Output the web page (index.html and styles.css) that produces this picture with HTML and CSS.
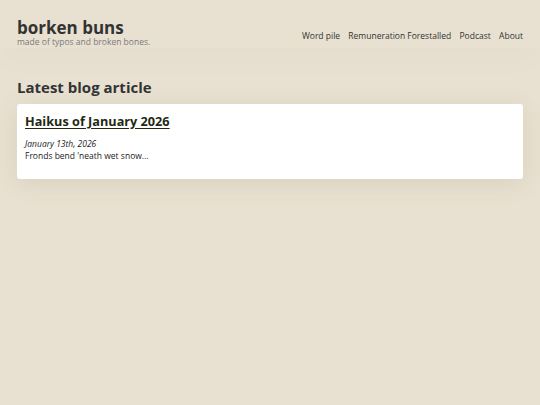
FILE: index.html
```html
<!DOCTYPE html>
<html>
<head>
<meta charset="utf-8">
<link rel="stylesheet" href="styles.css">
</head>
<body>
<header class="site-header">
  <div class="brand">
    <div class="site-title">borken buns</div>
    <div class="tagline">made of typos and broken bones.</div>
  </div>
  <nav class="nav">
    <a href="#">Word pile</a>
    <a href="#">Remuneration Forestalled</a>
    <a href="#">Podcast</a>
    <a href="#">About</a>
  </nav>
</header>
<main class="main">
  <h2 class="section-title">Latest blog article</h2>
  <article class="card">
    <h3 class="card-title"><a href="#">Haikus of January 2026</a></h3>
    <div class="card-date">January 13th, 2026</div>
    <p class="card-excerpt">Fronds bend 'neath wet snow...</p>
  </article>
</main>
</body>
</html>
```
FILE: styles.css
```css
html, body {
  margin: 0;
  padding: 0;
}
body {
  background: #e8e1d1;
  font-family: "Open Sans", "Noto Sans", sans-serif;
  color: #333;
  min-height: 405px;
}
.site-header {
  display: flex;
  justify-content: space-between;
  align-items: center;
  padding: 16px 17px 0 17px;
  height: 48px;
  box-sizing: border-box;
  box-shadow: 0 16px 30px rgba(0,0,0,0.015);
}
.site-title {
  font-size: 17px;
  font-weight: 700;
  line-height: 19px;
  color: #333;
}
.tagline {
  font-size: 8.5px;
  line-height: 10px;
  color: #7a7a7a;
}
.nav {
  display: flex;
  gap: 8.3px;
  margin-top: 6px;
}
.nav a {
  font-size: 8.5px;
  color: #333;
  text-decoration: none;
}
.main {
  padding: 0 17px;
}
.section-title {
  font-size: 15px;
  font-weight: 700;
  margin: 28px 0 6px 0;
  line-height: 22px;
  color: #333;
}
.card {
  background: #fff;
  border-radius: 3px;
  padding: 9px 8px 12px 8px;
  box-shadow: 0 4px 24px rgba(90,70,30,0.1);
  height: 75px;
  box-sizing: border-box;
}
.card-title {
  margin: 0;
  font-size: 12.7px;
  font-weight: 700;
  line-height: 16px;
}
.card-title a {
  color: #1e2a12;
  text-decoration: underline;
  text-underline-offset: 2px;
}
.card-date {
  margin-top: 9px;
  font-size: 8.5px;
  font-style: italic;
  line-height: 12px;
  color: #222;
}
.card-excerpt {
  margin: 0;
  font-size: 8.5px;
  line-height: 12px;
  color: #222;
}
```
